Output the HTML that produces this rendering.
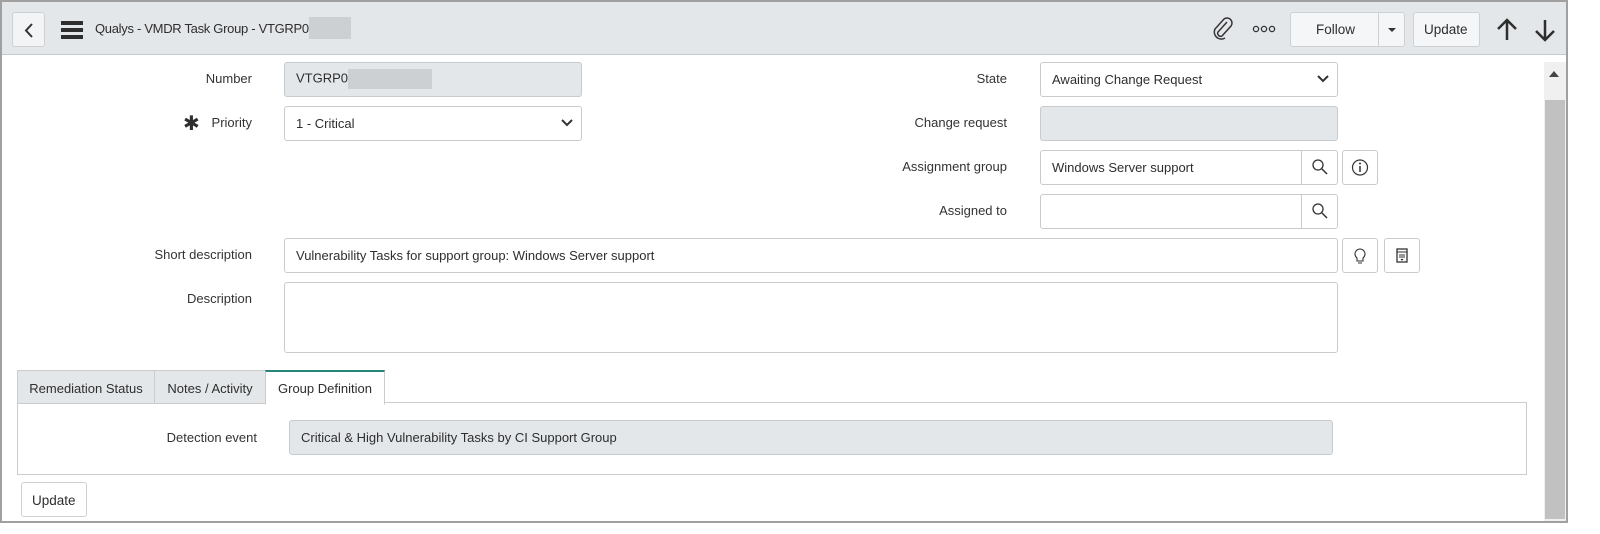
<!DOCTYPE html>
<html><head><style>
*{box-sizing:border-box;margin:0;padding:0}
body{width:1600px;height:534px;background:#fff;font-family:"Liberation Sans",sans-serif;font-size:13px;color:#2e2e2e;position:relative;overflow:hidden}
.frame{position:absolute;left:0;top:0;width:1568px;height:523px;border:2px solid #a0a0a0;background:#fff}
.hdr{position:absolute;left:0;top:0;width:1564px;height:53px;background:#e4e7ea;border-bottom:1px solid #c8cbce}
.a{position:absolute;white-space:nowrap}
.btn{position:absolute;border:1px solid #cdd1d4;border-radius:3px;background:#f5f6f7}
.lbl{position:absolute;text-align:right;width:200px;font-size:13px;color:#333;white-space:nowrap}
.inp{position:absolute;border:1px solid #c8cbce;border-radius:3px;background:#fff;height:35px;padding:9px 11px;font-size:13px;white-space:nowrap}
.ro{background:#e4e7ea}
.ib{position:absolute;border:1px solid #c8cbce;border-radius:3px;background:#fff;width:36px;height:35px}
.tab{position:absolute;top:368px;height:34px;background:#e4e7ea;border:1px solid #ccc;padding:10px 0;font-size:13px;white-space:nowrap;text-align:center}
.red{display:inline-block;vertical-align:middle;background:#cdd0d3}
</style></head><body>
<div class="frame">
<div class="hdr">
 <div class="btn" style="left:10px;top:10px;width:33px;height:35px;background:#f3f4f5"><svg width="33" height="35"><path d="M19 11l-6 6.5 6 6.5" fill="none" stroke="#333" stroke-width="2"/></svg></div>
 <div class="a" style="left:59px;top:19px;width:22px;height:4px;background:#2e2e2e"></div>
 <div class="a" style="left:59px;top:26px;width:22px;height:4px;background:#2e2e2e"></div>
 <div class="a" style="left:59px;top:33px;width:22px;height:4px;background:#2e2e2e"></div>
 <div class="a" style="left:93px;top:16px;font-size:13px;letter-spacing:-0.3px;line-height:22px">Qualys - VMDR Task Group - VTGRP0<span class="red" style="width:42px;height:22px;margin-top:-3px"></span></div>
 <svg class="a" style="left:1208px;top:14px" width="26" height="26"><path d="M17 6l-9 10a3 3 0 0 0 4 4l9-10a5 5 0 0 0-7-7l-9 10a7 7 0 0 0 10 9" fill="none" stroke="#333" stroke-width="1.5"/></svg>
 <svg class="a" style="left:1250px;top:23px" width="26" height="8"><circle cx="4" cy="4" r="2.6" fill="none" stroke="#333" stroke-width="1.3"/><circle cx="12" cy="4" r="2.6" fill="none" stroke="#333" stroke-width="1.3"/><circle cx="20" cy="4" r="2.6" fill="none" stroke="#333" stroke-width="1.3"/></svg>
 <div class="btn" style="left:1288px;top:10px;width:115px;height:35px"><div class="a" style="left:25px;top:9px;font-size:13.5px">Follow</div><div class="a" style="left:87px;top:0;height:33px;border-left:1px solid #cdd1d4;width:1px"></div><svg class="a" style="left:96px;top:14px" width="10" height="6"><path d="M1 1h8l-4 4z" fill="#333"/></svg></div>
 <div class="btn" style="left:1411px;top:10px;width:67px;height:35px"><div class="a" style="left:10px;top:9px;font-size:13.5px">Update</div></div>
 <svg class="a" style="left:1492px;top:15px" width="26" height="26"><path d="M13 23V4M4 12l9-9 9 9" fill="none" stroke="#2e2e2e" stroke-width="2.5"/></svg>
 <svg class="a" style="left:1530px;top:15px" width="26" height="26"><path d="M13 3v19M4 14l9 9 9-9" fill="none" stroke="#2e2e2e" stroke-width="2.5"/></svg>
</div>
<div class="a" style="left:1542px;top:60px;width:22px;height:459px;background:#f0f0f0"></div>
<svg class="a" style="left:1546px;top:68px" width="12" height="8"><path d="M1 7h10L6 1z" fill="#444"/></svg>
<div class="a" style="left:1543px;top:98px;width:20px;height:419px;background:#c1c1c1"></div>

<div class="lbl" style="left:50px;top:69px">Number</div>
<div class="inp ro" style="left:282px;top:60px;width:298px;padding-top:6px">VTGRP0<span class="red" style="width:84px;height:20px"></span></div>
<div class="lbl" style="left:50px;top:113px">Priority</div>
<div class="a" style="left:181px;top:109px;font-size:20px">✱</div>
<div class="inp" style="left:282px;top:104px;width:298px">1 - Critical</div>
<svg class="a" style="left:558px;top:116px" width="14" height="10"><path d="M2 2l5 5 5-5" fill="none" stroke="#333" stroke-width="2"/></svg>

<div class="lbl" style="left:805px;top:69px">State</div>
<div class="inp" style="left:1038px;top:60px;width:298px">Awaiting Change Request</div>
<svg class="a" style="left:1314px;top:72px" width="14" height="10"><path d="M2 2l5 5 5-5" fill="none" stroke="#333" stroke-width="2"/></svg>
<div class="lbl" style="left:805px;top:113px">Change request</div>
<div class="inp ro" style="left:1038px;top:104px;width:298px"></div>
<div class="lbl" style="left:805px;top:157px">Assignment group</div>
<div class="inp" style="left:1038px;top:148px;width:298px">Windows Server support</div>
<div class="a" style="left:1299px;top:149px;height:33px;border-left:1px solid #c8cbce"></div>
<svg class="a" style="left:1309px;top:156px" width="18" height="18"><circle cx="7" cy="7" r="5" fill="none" stroke="#333" stroke-width="1.3"/><path d="M11 11l5 5" stroke="#333" stroke-width="1.5"/></svg>
<div class="ib" style="left:1340px;top:148px"><svg width="34" height="33"><circle cx="17" cy="16.5" r="7.5" fill="none" stroke="#333" stroke-width="1.2"/><path d="M17 15v6" stroke="#333" stroke-width="1.5"/><circle cx="17" cy="12.5" r="1" fill="#333"/></svg></div>
<div class="lbl" style="left:805px;top:201px">Assigned to</div>
<div class="inp" style="left:1038px;top:192px;width:298px"></div>
<div class="a" style="left:1299px;top:193px;height:33px;border-left:1px solid #c8cbce"></div>
<svg class="a" style="left:1309px;top:200px" width="18" height="18"><circle cx="7" cy="7" r="5" fill="none" stroke="#333" stroke-width="1.3"/><path d="M11 11l5 5" stroke="#333" stroke-width="1.5"/></svg>

<div class="lbl" style="left:50px;top:245px">Short description</div>
<div class="inp" style="left:282px;top:236px;width:1054px">Vulnerability Tasks for support group: Windows Server support</div>
<div class="ib" style="left:1340px;top:236px"><svg width="34" height="33"><path d="M14 19a5 5 0 1 1 6 0v3h-6z" fill="none" stroke="#333" stroke-width="1.1"/><path d="M15 24h4" stroke="#333"/></svg></div>
<div class="ib" style="left:1382px;top:236px"><svg width="34" height="33"><rect x="12" y="10" width="10" height="13" fill="none" stroke="#333" stroke-width="1.3"/><path d="M12 13h10M14 16h6M14 18h6M16 20l1 1 1-1" stroke="#333"/></svg></div>
<div class="lbl" style="left:50px;top:289px">Description</div>
<div class="inp" style="left:282px;top:280px;width:1054px;height:71px"></div>

<div class="a" style="left:15px;top:400px;width:1510px;height:73px;border:1px solid #ccc"></div>
<div class="tab" style="left:15px;width:138px">Remediation Status</div>
<div class="tab" style="left:152px;width:112px">Notes / Activity</div>
<div class="tab" style="left:263px;width:120px;background:#fff;border-top:2px solid #278478;border-bottom:1px solid #fff;height:35px;padding-top:9px">Group Definition</div>
<div class="lbl" style="left:55px;top:428px">Detection event</div>
<div class="inp ro" style="left:287px;top:418px;width:1044px">Critical &amp; High Vulnerability Tasks by CI Support Group</div>
<div class="btn" style="left:19px;top:480px;width:66px;height:35px;background:#fff"><div class="a" style="left:10px;top:10px;font-size:13.5px">Update</div></div>
</div>
</body></html>
